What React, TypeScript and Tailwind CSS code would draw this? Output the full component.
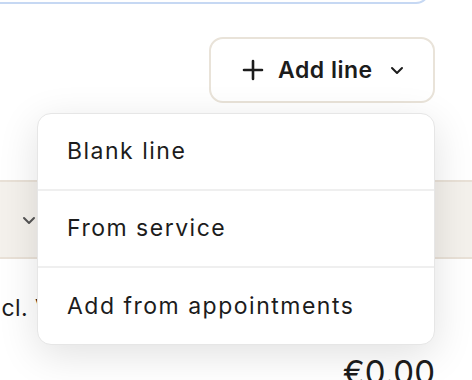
import React from "react";

const font = { fontFamily: "Inter, 'Noto Sans', sans-serif" };

export default function App() {
  return (
    <div className="relative w-[472px] h-[380px] overflow-hidden bg-white text-[#1c1c1c]" style={font}>
      {/* focused input above, only its bottom visible */}
      <div className="-mt-[40px] ml-[-20px] h-[44px] w-[450px] rounded-[14px] border-2 border-[#c6d8f3]" />

      {/* Add line button */}
      <div className="flex justify-end pr-[37px] pt-[33px]">
        <button className="flex h-[66px] w-[226px] items-center rounded-[14px] border-2 border-[#e9e3d9] bg-white pl-[31px]">
          <svg width="22" height="22" viewBox="0 0 22 22" className="shrink-0">
            <path d="M11 2v18M2 11h18" stroke="#1c1c1c" strokeWidth="2.6" strokeLinecap="round" />
          </svg>
          <span className="ml-[14px] text-[23px] font-semibold tracking-[0.5px]">Add line</span>
          <svg width="14" height="10" viewBox="0 0 14 10" className="ml-[17px] shrink-0">
            <path d="M2 3l5 5 5-5" fill="none" stroke="#1c1c1c" strokeWidth="2" strokeLinecap="round" strokeLinejoin="round" />
          </svg>
        </button>
      </div>

      {/* table behind */}
      <div className="mt-[77px] flex h-[79px] items-center border-y-2 border-[#e9e1d7] bg-[#f4f1ec]">
        <span className="ml-[-14px] text-[23px]">o</span>
        <svg width="14" height="10" viewBox="0 0 14 10" className="ml-[22px]">
          <path d="M2 3l5 5 5-5" fill="none" stroke="#555" strokeWidth="2" strokeLinecap="round" strokeLinejoin="round" />
        </svg>
      </div>
      <div className="mt-[32px] flex">
        <span className="ml-[-19px] text-[23px] tracking-[0.4px]">Incl. VAT</span>
      </div>
      <div className="mt-[26px] flex justify-end pr-[37px]">
        <span className="text-[33px] leading-[40px]">€0.00</span>
      </div>

      {/* dropdown menu */}
      <div className="absolute left-[37px] top-[113px] flex w-[398px] flex-col rounded-[14px] border border-[#e6e6e6] bg-white shadow-[0_10px_40px_rgba(0,0,0,0.12)]">
        <div className="flex h-[77px] items-center border-b-2 border-[#efefef] pl-[29px] text-[23px] tracking-[1.5px]">Blank line</div>
        <div className="flex h-[77px] items-center border-b-2 border-[#efefef] pl-[29px] text-[23px] tracking-[1.5px]">From service</div>
        <div className="flex h-[76px] items-center pl-[29px] text-[23px] tracking-[1.5px]">Add from appointments</div>
      </div>
    </div>
  );
}
